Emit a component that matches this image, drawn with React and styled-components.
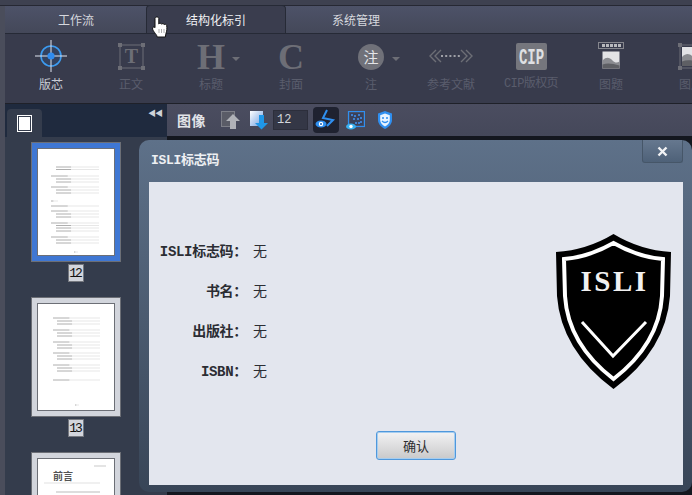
import React from 'react';
import styled, { createGlobalStyle } from 'styled-components';

const CJK = '"Noto Sans CJK SC", "Liberation Sans", sans-serif';
const MONO = '"Liberation Mono", "Noto Sans CJK SC", monospace';

const Global = createGlobalStyle`
  html, body { margin: 0; padding: 0; background: #14171f; }
  * { box-sizing: border-box; }
`;

const Screen = styled.div`
  position: relative;
  width: 692px;
  height: 495px;
  overflow: hidden;
  display: flex;
  flex-direction: column;
  padding-left: 5px;
  background: #4a4d5b;
  font-family: ${CJK};
  font-size: 12px;
`;

const TopStrip = styled.div`
  height: 6px;
  margin-left: -5px;
  background: #3e4150;
  border-bottom: 1px solid #262833;
  border-top: 3px solid #3e4150;
  flex: none;
`;

const TabBar = styled.div`
  height: 28px;
  flex: none;
  display: flex;
  background: linear-gradient(#4d5268, #444859);
  border-bottom: 1px solid #262a36;
  padding-left: 1px;
`;

const Tab = styled.div`
  width: 140px;
  height: ${p => (p.$active ? '28px' : '27px')};
  display: flex;
  align-items: center;
  justify-content: center;
  color: ${p => (p.$active ? '#f0f1f4' : '#d6d8de')};
  background: ${p => (p.$active ? '#3a3d4e' : 'transparent')};
  border: ${p => (p.$active ? '1px solid #262a36' : 'none')};
  border-bottom: none;
  border-radius: 4px 4px 0 0;
  margin-top: ${p => (p.$active ? '-1px' : '0')};
  z-index: 1;
`;

const Ribbon = styled.div`
  height: 70px;
  flex: none;
  display: grid;
  grid-template-columns: repeat(9, 80px);
  padding-left: 6px;
  background: #383b4c;
  border-bottom: 1px solid #1f2129;
`;

const RibbonItem = styled.div`
  display: flex;
  flex-direction: column;
  align-items: center;
  color: ${p => (p.$on ? '#c9ccd4' : '#5a5d6c')};
  white-space: nowrap;
`;

const RibbonIcon = styled.div`
  height: 44px;
  width: 100%;
  display: flex;
  align-items: center;
  justify-content: center;
  position: relative;
`;

const RibbonLabel = styled.div`
  line-height: 14px;
  margin-top: -1px;
  font-family: ${p => (p.$mono ? MONO : CJK)};
  letter-spacing: ${p => (p.$mono ? '-0.6px' : '0')};
`;

const BigLetter = styled.span`
  font-family: "Liberation Serif", serif;
  font-weight: bold;
  font-size: 36px;
  line-height: 30px;
  color: #6d6e76;
  margin-top: 2px;
`;

const Caret = styled.span`
  position: absolute;
  left: 61px;
  top: 23px;
  width: 0;
  height: 0;
  border-left: 4px solid transparent;
  border-right: 4px solid transparent;
  border-top: 4px solid #6d6e76;
`;

const NoteDisc = styled.span`
  width: 26px;
  height: 26px;
  margin-top: 1px;
  border-radius: 50%;
  background: #707179;
  color: #e4e5e8;
  font-size: 15px;
  display: flex;
  align-items: center;
  justify-content: center;
`;

const Body = styled.div`
  flex: 1;
  display: flex;
  min-height: 0;
`;

const Sidebar = styled.div`
  width: 162px;
  flex: none;
  display: flex;
  flex-direction: column;
  background: #343c4c;
`;

const SideHead = styled.div`
  height: 33px;
  flex: none;
  display: flex;
  align-items: flex-end;
  justify-content: space-between;
  padding: 0 5px 0 2px;
  background: #1f2a3e;
`;

const SideTab = styled.div`
  width: 35px;
  height: 28px;
  border-radius: 4px 4px 0 0;
  background: #343c4c;
  display: flex;
  align-items: center;
  justify-content: center;
`;

const PageGlyph = styled.span`
  width: 11px;
  height: 13px;
  background: #fff;
  outline: 1px solid #343c4c;
  border: 1px solid #fff;
  box-shadow: 0 0 0 2px #fff;
`;

const Collapse = styled.div`
  align-self: flex-start;
  margin-top: 4px;
  color: #cfd2d9;
  font-size: 8px;
  letter-spacing: -1px;
  line-height: 10px;
`;

const ThumbList = styled.div`
  flex: 1;
  display: flex;
  flex-direction: column;
  gap: 15px;
  padding: 5px 0 0 26px;
`;

const Thumb = styled.div`
  display: flex;
  flex-direction: column;
  align-items: center;
  width: 90px;
  gap: 2px;
`;

const ThumbFrame = styled.div`
  width: 90px;
  height: 120px;
  flex: none;
  padding: 5px;
  background: ${p => (p.$selected ? '#3f77d3' : '#d2d5dc')};
  border: 1px solid #6c6f76;
  display: flex;
`;

const ThumbPage = styled.div`
  flex: 1;
  background: #fff;
  border: 1px solid #6c6f76;
  overflow: hidden;
`;

const PageNum = styled.div`
  width: 16px;
  height: 18px;
  background: #d2d5dc;
  border: 1px solid #75787f;
  color: #111;
  font-family: ${MONO};
  font-size: 13px;
  letter-spacing: -2px;
  padding-right: 2px;
  display: flex;
  align-items: center;
  justify-content: center;
`;

const Main = styled.div`
  flex: 1;
  display: flex;
  flex-direction: column;
  background: #14171f;
`;

const ToolRow = styled.div`
  height: 32px;
  flex: none;
  display: flex;
  align-items: center;
  padding-left: 10px;
  background: linear-gradient(#4b4d60, #45485a);
`;

const ToolTitle = styled.div`
  width: 44px;
  color: #e1e3e8;
  font-size: 14px;
  font-weight: 700;
  letter-spacing: 0.5px;
`;

const ToolIcon = styled.div`
  width: ${p => p.$w || 20}px;
  height: ${p => (p.$active ? 26 : 22)}px;
  margin-left: ${p => p.$gap || 0}px;
  display: flex;
  align-items: center;
  justify-content: center;
  background: ${p => (p.$active ? '#1f2230' : 'transparent')};
  border-radius: 4px;
`;

const NumBox = styled.div`
  width: 35px;
  height: 20px;
  margin-left: 3px;
  padding-left: 3px;
  background: #343746;
  border: 1px solid #2c2e3b;
  color: #d5d7dc;
  font-family: ${MONO};
  font-size: 12px;
  letter-spacing: 0;
  display: flex;
  align-items: center;
`;

const Dialog = styled.div`
  position: absolute;
  left: 139px;
  top: 140px;
  width: 553px;
  height: 352px;
  padding: 0 9px 7px 10px;
  display: flex;
  flex-direction: column;
  border-radius: 10px;
  background: linear-gradient(#5e7189, #384557);
  z-index: 5;
`;

const DialogHead = styled.div`
  height: 42px;
  flex: none;
  display: flex;
  align-items: center;
  justify-content: space-between;
  padding: 0 0 6px 2px;
  position: relative;
`;

const DialogTitle = styled.div`
  color: #eef0f3;
  font-family: ${MONO};
  font-size: 13px;
  font-weight: bold;
  letter-spacing: -0.3px;
`;

const CloseBtn = styled.div`
  position: absolute;
  right: 0;
  top: 0;
  width: 41px;
  height: 23px;
  border: 1px solid #465668;
  border-top: none;
  border-radius: 0 0 3px 3px;
  background: linear-gradient(#66788f, #4e6178);
  display: flex;
  align-items: center;
  justify-content: center;
`;

const DialogBody = styled.div`
  flex: 1;
  background: #e3e6ee;
  display: flex;
  position: relative;
  padding-top: 48px;
`;

const InfoList = styled.div`
  display: grid;
  grid-template-columns: 98px auto;
  grid-auto-rows: 40px;
  align-content: start;
  column-gap: 6px;
  align-items: baseline;
  width: 200px;
`;

const InfoLabel = styled.div`
  justify-self: end;
  color: #2b2d33;
  font-family: ${MONO};
  font-size: 14px;
  font-weight: bold;
  letter-spacing: -0.3px;
  line-height: 40px;
  white-space: nowrap;
`;

const InfoValue = styled.div`
  color: #2b2d33;
  font-size: 14px;
  line-height: 40px;
`;

const ShieldWrap = styled.div`
  position: absolute;
  left: 407px;
  top: 52px;
`;

const Confirm = styled.div`
  position: absolute;
  left: 227px;
  top: 249px;
  width: 80px;
  height: 29px;
  border: 1px solid #4f98dc;
  box-shadow: inset 0 0 0 1px #a6cdef;
  border-radius: 3px;
  background: linear-gradient(#f3f3f4, #c9c9ca);
  color: #2e2e30;
  font-size: 13px;
  display: flex;
  align-items: center;
  justify-content: center;
`;

const Cursor = styled.div`
  position: absolute;
  left: 152px;
  top: 16px;
  z-index: 6;
  line-height: 0;
`;

// 缩略图里的目录行：[y, 起点, 终点]
const PAGE_12 = [
  [18, 18, 61], [20.5, 18, 61],
  [27, 13, 61], [30, 18, 61], [33, 18, 61],
  [38, 13, 61], [41, 18, 61], [44, 18, 61],
  [52, 13, 20], [57, 13, 61],
  [62, 13, 61], [65, 18, 61], [68, 18, 61],
  [74, 13, 61], [76.5, 18, 61], [79, 18, 61], [82, 18, 61],
  [88, 13, 61], [91, 18, 61], [94, 18, 61],
  [103, 36, 40],
];
const PAGE_13 = [
  [14, 15, 62], [17, 19, 62], [20, 19, 62],
  [26, 15, 62], [29, 19, 62], [32, 19, 62],
  [38, 15, 62], [41, 19, 62], [44, 19, 62],
  [49, 15, 62], [52, 19, 62], [55, 19, 62],
  [61, 15, 62], [64, 19, 62], [67, 19, 62],
  [76, 15, 62], [101, 37, 41],
];

const PageLines = ({ rows }) => (
  <svg width="76" height="106" viewBox="0 0 76 106">
    {rows.map(([y, a, b], i) => (
      <g key={i}>
        <line x1={a} x2={a + (b - a) * 0.35} y1={y} y2={y} stroke="#9a9a9a" strokeWidth="0.8" />
        <line x1={a + (b - a) * 0.35} x2={b} y1={y} y2={y} stroke="#dcdcdc" strokeWidth="0.7" />
      </g>
    ))}
  </svg>
);

const PrefacePage = () => (
  <svg width="76" height="106" viewBox="0 0 76 106">
    <line x1="56" x2="68" y1="7" y2="7" stroke="#bbb" strokeWidth="0.8" />
    <text x="15" y="21" fontSize="10" fontWeight="bold" fontFamily={CJK} fill="#555">前言</text>
    <line x1="6" x2="62" y1="24" y2="24" stroke="#ccc" strokeWidth="0.6" />
    <line x1="18" x2="62" y1="33" y2="33" stroke="#aaa" strokeWidth="0.8" />
  </svg>
);

const HandleBox = ({ children, size = 27 }) => (
  <svg width={size} height={size} viewBox="0 0 27 27">
    <rect x="2" y="2" width="23" height="23" fill="none" stroke="#6d6e76" strokeWidth="1" />
    {[[0, 0], [23, 0], [0, 23], [23, 23]].map(([x, y]) => (
      <rect key={`${x}${y}`} x={x} y={y} width="4" height="4" fill="#6d6e76" />
    ))}
    {children}
  </svg>
);

const Crosshair = () => (
  <svg width="32" height="32" viewBox="0 0 32 32">
    <circle cx="16" cy="16" r="10" fill="#2a4f85" fillOpacity=".35" stroke="#3c9bf0" strokeWidth="1.6" />
    <line x1="0" x2="32" y1="16" y2="16" stroke="#dfe6f0" strokeWidth="1" />
    <line x1="16" x2="16" y1="0" y2="32" stroke="#dfe6f0" strokeWidth="1" />
    <circle cx="16" cy="16" r="3.6" fill="#2f8cf0" />
  </svg>
);

const RefIcon = () => (
  <svg width="44" height="16" viewBox="0 0 44 16" fill="none" stroke="#6d6e76" strokeWidth="1.4">
    <path d="M7 2L1 8l6 6M12 2L6 8l6 6M32 2l6 6-6 6M37 2l6 6-6 6" />
    <path d="M12 8h20" strokeDasharray="2 2.2" stroke="#9fa0a7" strokeWidth="2" />
  </svg>
);

const CipIcon = () => (
  <svg width="31" height="27" viewBox="0 0 31 27">
    <rect width="31" height="27" rx="2" fill="#75767d" />
    <text transform="translate(15.5 21) scale(1 1.6)" textAnchor="middle" fontSize="14" fontFamily="Liberation Mono, monospace" fontWeight="bold" fill="#dfe0e3">CIP</text>
  </svg>
);

const Landscape = ({ x = 0, y = 0, w = 17, h = 17 }) => (
  <g transform={`translate(${x} ${y}) scale(${w / 17} ${h / 17})`}>
    <rect width="17" height="17" fill="#e3e3e6" />
    <path d="M0 9c4-4 7-3 10 0s5 2 7 1v7H0z" fill="#8a8b90" />
    <path d="M0 13c5-2 10-1 17 1v3H0z" fill="#5e5f64" />
  </g>
);

const FigureTitleIcon = () => (
  <svg width="26" height="28" viewBox="0 0 26 28">
    <rect x=".5" y=".5" width="25" height="6" fill="none" stroke="#85868d" />
    {[4, 8, 12, 16, 20].map(x => <rect key={x} x={x} y="2" width="3" height="3" fill="#b8b9bd" />)}
    <Landscape x={4.5} y={9.5} />
  </svg>
);

const FigureIcon = () => (
  <HandleBox>
    <Landscape x={4} y={4} w={19} h={19} />
  </HandleBox>
);

const UpIcon = () => (
  <svg width="20" height="20" viewBox="0 0 20 20">
    <rect x=".5" y="1.500" width="13" height="15" fill="#5a5c67" stroke="#7d7f88" />
    <path d="M12 4l7 7h-4v8H9v-8H5z" fill="#b0b2b8" />
  </svg>
);

const DownIcon = () => (
  <svg width="20" height="20" viewBox="0 0 20 20">
    <defs>
      <linearGradient id="docFill" x1="0" y1="0" x2="1" y2="1">
        <stop offset="0" stopColor="#fff" />
        <stop offset="1" stopColor="#6f9fe0" />
      </linearGradient>
    </defs>
    <rect x="0" y="1" width="13" height="15" fill="url(#docFill)" />
    <path d="M9 5h5v8h4l-6.500 6.500L5 13h4z" fill="#1f97e8" />
  </svg>
);

const EyeBolt = () => (
  <svg width="22" height="22" viewBox="0 0 22 22" fill="none">
    <path d="M12 1L8 9l10 2-6 6" stroke="#2f8ff0" strokeWidth="2" />
    <ellipse cx="6" cy="15" rx="5.500" ry="3.500" fill="#2f8ff0" />
    <circle cx="6" cy="15" r="2.200" fill="#fff" />
    <circle cx="6" cy="15" r="1" fill="#1b5fb0" />
  </svg>
);

const QrEye = () => (
  <svg width="19" height="19" viewBox="0 0 19 19" fill="none">
    <rect x="2.500" y=".5" width="16" height="15" stroke="#2f8ff0" strokeWidth="1.200" />
    <rect x="4" y="2" width="13" height="12" fill="#39415a" />
    {[[5, 3], [8, 4], [12, 3], [14, 6], [7, 7], [11, 7], [14, 10], [9, 11], [12, 11]].map(([x, y]) => (
      <rect key={`${x}-${y}`} x={x} y={y} width="2" height="2" fill="#3f7fd0" />
    ))}
    <ellipse cx="5" cy="15.500" rx="5" ry="3" fill="#39b0f0" />
    <circle cx="5" cy="15.500" r="1.700" fill="#fff" />
  </svg>
);

const GuardIcon = () => (
  <svg width="16" height="18" viewBox="0 0 16 18">
    <path d="M8 0l7 2.500V9c0 4-3 7-7 9-4-2-7-5-7-9V2.500z" fill="#2f8ff0" />
    <path d="M8 2.500l4.800 1.700V9c0 2.800-2 5-4.800 6.400C5.200 14 3.200 11.800 3.200 9V4.200z" fill="#e8f3ff" />
    <path d="M5 7h2M9 7h2M5 10c2 2 4 2 6 0" stroke="#2f8ff0" strokeWidth="1.300" fill="none" />
  </svg>
);

const CloseIcon = () => (
  <svg width="11" height="11" viewBox="0 0 11 11">
    <path d="M1.500 1.500l8 8M9.500 1.500l-8 8" stroke="#f2f3f5" strokeWidth="2.400" />
  </svg>
);

const HandCursor = () => (
  <svg width="16" height="23" viewBox="0 0 16 23">
    <path
      d="M3 2.500c0-2 3.800-2 3.800 0v5.500c.4-1 2.600-1 2.800.2.500-.9 2.500-.7 2.700.5.500-.7 2.200-.5 2.400.8.400 2.700.2 5.200-.6 7.500-.4 1.200-.6 2.500-.7 4H5.200c-.3-1.700-1.500-3-2.700-4.600C1.500 15 .3 13.500.6 12c.3-1.300 1.600-1.300 2.400-.3z"
      fill="#fff"
      stroke="#111"
      strokeWidth="1"
    />
    <path d="M7 13v4M9.500 13v4M12 13v4" stroke="#999" strokeWidth="0.8" />
  </svg>
);

const IsliShield = () => (
  <svg width="115" height="155" viewBox="0 0 115 155">
    <path d="M57.500 0Q84 16 115 18L114 62Q110 116 57.500 155Q5 116 1 62L0 18Q31 16 57.500 0Z" fill="#000" />
    <path d="M57.500 9Q82 23 107 25L106 62Q103 110 57.500 145Q12 110 9 62L8 25Q33 23 57.500 9Z" fill="#000" stroke="#fff" strokeWidth="4" />
    <text x="58.500" y="57" textAnchor="middle" fontFamily="Liberation Serif, serif" fontWeight="bold" fontSize="29" letterSpacing="2.500" fill="#f1f1f1">ISLI</text>
    <path d="M26 88L57 122L90 88" fill="none" stroke="#fff" strokeWidth="3" />
  </svg>
);

const RIBBON = [
  { label: '版芯', on: true, icon: <Crosshair /> },
  { label: '正文', icon: <HandleBox><text x="13.500" y="20" textAnchor="middle" fontFamily="Liberation Serif, serif" fontWeight="bold" fontSize="20" fill="#6d6e76">T</text></HandleBox> },
  { label: '标题', icon: <><BigLetter>H</BigLetter><Caret /></> },
  { label: '封面', icon: <BigLetter>C</BigLetter> },
  { label: '注', icon: <><NoteDisc>注</NoteDisc><Caret /></> },
  { label: '参考文献', icon: <RefIcon /> },
  { label: 'CIP版权页', mono: true, icon: <CipIcon /> },
  { label: '图题', icon: <FigureTitleIcon /> },
  { label: '图片', icon: <FigureIcon /> },
];

const INFO = [
  ['ISLI标志码：', '无'],
  ['书名：', '无'],
  ['出版社：', '无'],
  ['ISBN：', '无'],
];

export default function App() {
  return (
    <>
      <Global />
      <Screen>
        <TopStrip />
        <TabBar>
          <Tab>工作流</Tab>
          <Tab $active>结构化标引</Tab>
          <Tab>系统管理</Tab>
        </TabBar>
        <Ribbon>
          {RIBBON.map(item => (
            <RibbonItem key={item.label} $on={item.on}>
              <RibbonIcon>{item.icon}</RibbonIcon>
              <RibbonLabel $mono={item.mono}>{item.label}</RibbonLabel>
            </RibbonItem>
          ))}
        </Ribbon>
        <Body>
          <Sidebar>
            <SideHead>
              <SideTab><PageGlyph /></SideTab>
              <Collapse>◀◀</Collapse>
            </SideHead>
            <ThumbList>
              <Thumb>
                <ThumbFrame $selected><ThumbPage><PageLines rows={PAGE_12} /></ThumbPage></ThumbFrame>
                <PageNum>12</PageNum>
              </Thumb>
              <Thumb>
                <ThumbFrame><ThumbPage><PageLines rows={PAGE_13} /></ThumbPage></ThumbFrame>
                <PageNum>13</PageNum>
              </Thumb>
              <Thumb>
                <ThumbFrame><ThumbPage><PrefacePage /></ThumbPage></ThumbFrame>
              </Thumb>
            </ThumbList>
          </Sidebar>
          <Main>
            <ToolRow>
              <ToolTitle>图像</ToolTitle>
              <ToolIcon><UpIcon /></ToolIcon>
              <ToolIcon $gap={9}><DownIcon /></ToolIcon>
              <NumBox>12</NumBox>
              <ToolIcon $active $w={26} $gap={5}><EyeBolt /></ToolIcon>
              <ToolIcon $gap={6}><QrEye /></ToolIcon>
              <ToolIcon $gap={8} $w={24}><GuardIcon /></ToolIcon>
            </ToolRow>
          </Main>
        </Body>

        <Cursor><HandCursor /></Cursor>

        <Dialog>
          <DialogHead>
            <DialogTitle>ISLI标志码</DialogTitle>
            <CloseBtn><CloseIcon /></CloseBtn>
          </DialogHead>
          <DialogBody>
            <InfoList>
              {INFO.map(([k, v]) => (
                <React.Fragment key={k}>
                  <InfoLabel>{k}</InfoLabel>
                  <InfoValue>{v}</InfoValue>
                </React.Fragment>
              ))}
            </InfoList>
            <ShieldWrap><IsliShield /></ShieldWrap>
            <Confirm>确认</Confirm>
          </DialogBody>
        </Dialog>
      </Screen>
    </>
  );
}
